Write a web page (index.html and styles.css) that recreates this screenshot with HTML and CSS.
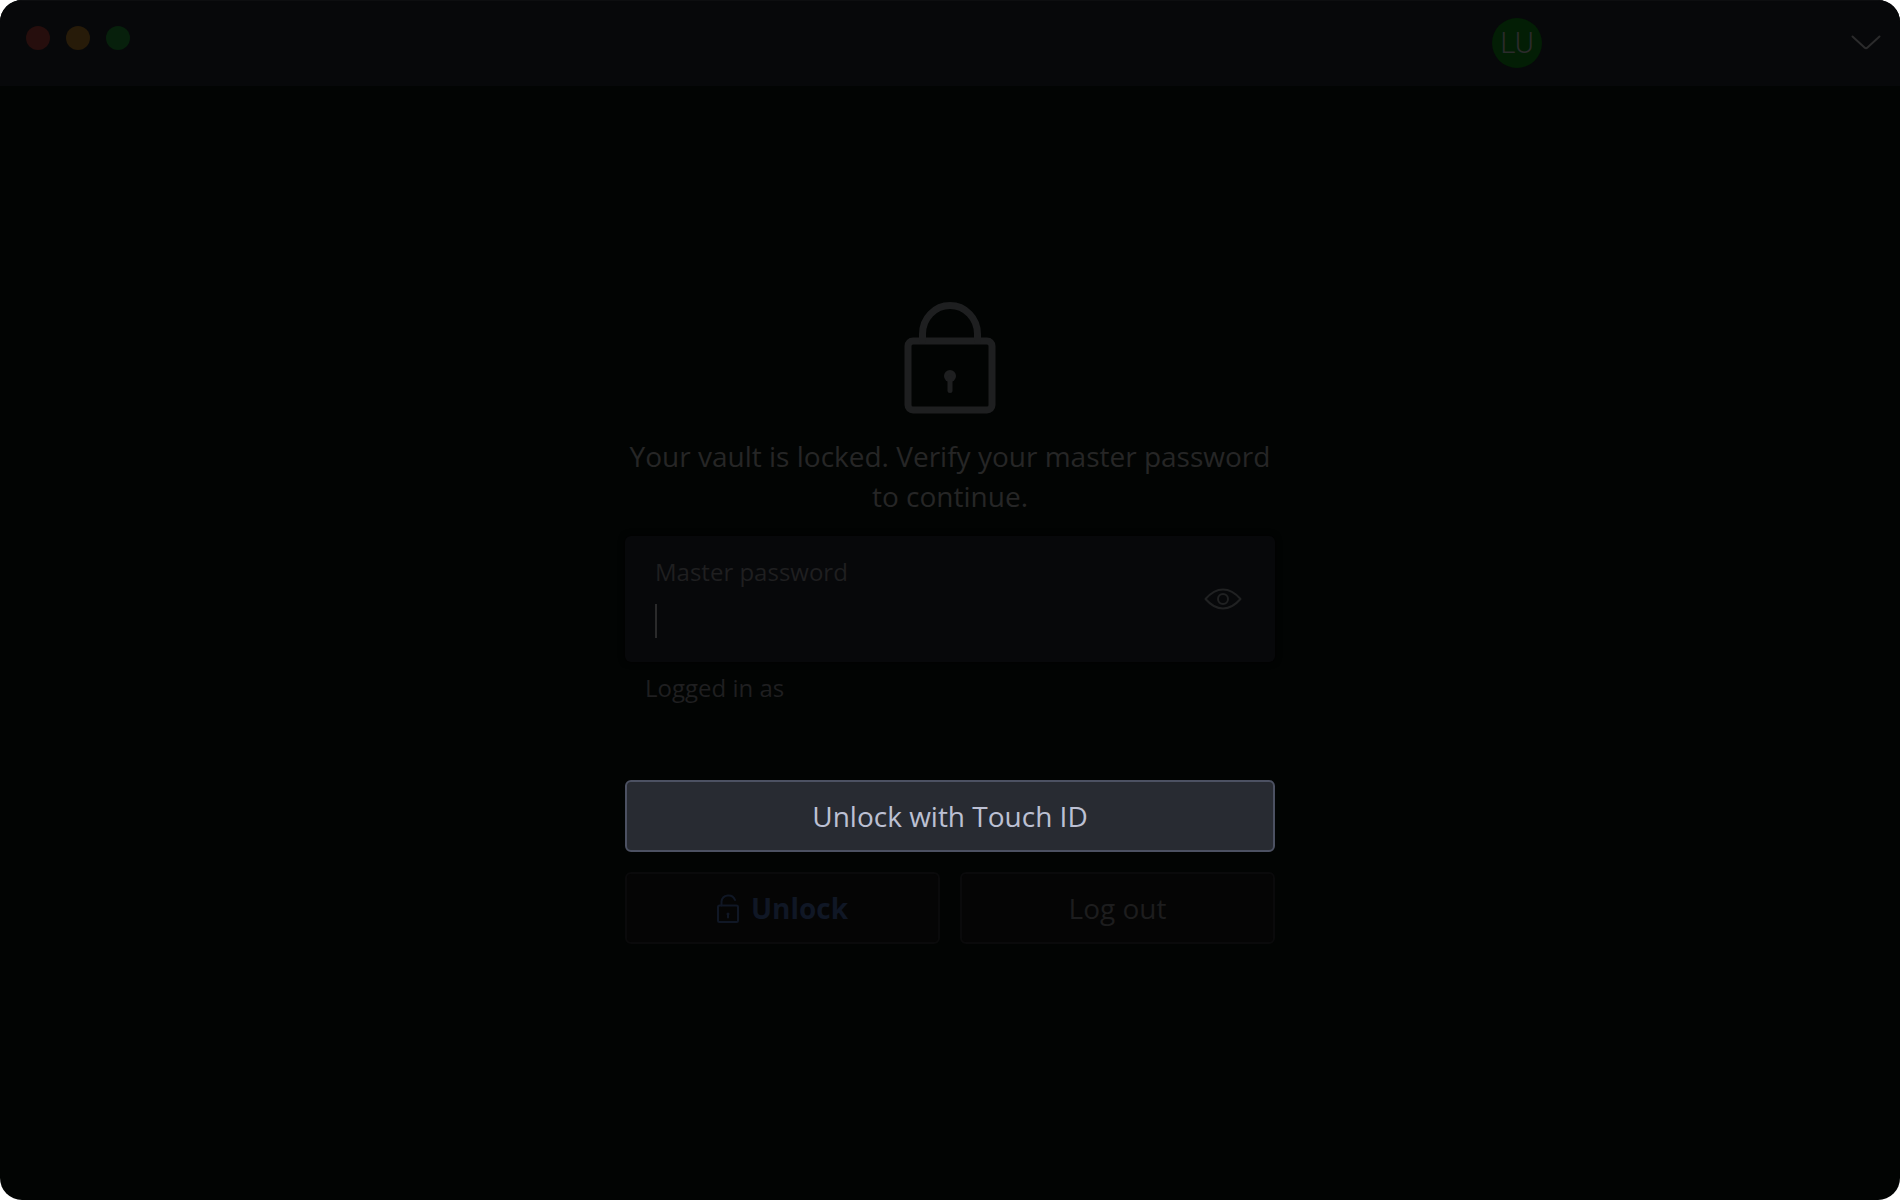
FILE: index.html
```html
<!DOCTYPE html>
<html lang="en">
<head>
    <meta charset="utf-8" />
    <meta name="viewport" content="width=device-width, initial-scale=1" />
    <title>Vault locked</title>
    <link rel="stylesheet" href="styles.css">
</head>
<body>
    <div class="window">
        <header class="titlebar">
            <div class="lights">
                <span class="light red"></span>
                <span class="light yellow"></span>
                <span class="light green"></span>
            </div>
            <button type="button" class="account" aria-label="Account">
                <span class="avatar">LU</span>
                <svg class="chevron" viewBox="0 0 30 16" aria-hidden="true">
                    <path d="M1.500 1.500 L13.500 12.500 Q15 14 16.500 12.500 L28.500 1.500" />
                </svg>
            </button>
        </header>

        <main class="content">
            <form class="lock-form">
                <svg class="lock-icon" viewBox="0 0 92 112" aria-hidden="true">
                    <rect x="4" y="39" width="84" height="69" rx="5" />
                    <path d="M18.500 38 V32 A27.500 28.500 0 0 1 73.500 32 V38" />
                    <circle class="hole" cx="46" cy="74" r="6" />
                    <path class="slot" d="M46 76 V88.500" />
                </svg>
                <p class="message">Your vault is locked. Verify your master password to continue.</p>

                <div class="field">
                    <div class="field-main">
                        <label for="masterPassword">Master password</label>
                        <input id="masterPassword" type="password">
                    </div>
                    <button type="button" class="toggle" aria-label="Toggle visibility">
                        <svg viewBox="0 0 38 22" aria-hidden="true">
                            <path d="M1.500 11 C5 7 11 1.500 19 1.500 S33 7 36.500 11 C33 15 27 20.500 19 20.500 S5 15 1.500 11 Z" />
                            <circle cx="19" cy="11" r="5" />
                        </svg>
                    </button>
                </div>
                <p class="logged-in">Logged in as</p>

                <div class="buttons">
                    <button type="button" class="btn touch-id">Unlock with Touch ID</button>
                    <button type="submit" class="btn primary">
                        <svg class="unlock-icon" viewBox="0 0 22 29" aria-hidden="true">
                            <rect x="1" y="11.500" width="20" height="16.500" rx="1.500" />
                            <path d="M4.500 11.500 V7.500 A7 7 0 0 1 18 6" />
                            <circle class="hole" cx="11" cy="20" r="1.500" />
                            <path class="slot" d="M11 20 V23.500" />
                        </svg>
                        Unlock
                    </button>
                    <button type="button" class="btn">Log out</button>
                </div>
            </form>
        </main>
    </div>
</body>
</html>
```

FILE: styles.css
```css
* {
    box-sizing: border-box;
}

body {
    margin: 0;
    background-color: #fff;
    font-family: "Open Sans", sans-serif;
}

button,
input {
    font-family: inherit;
}

p {
    margin: 0;
}

svg {
    fill: none;
    stroke: currentColor;
    stroke-linecap: round;
    stroke-linejoin: round;
}

.window {
    display: flex;
    flex-direction: column;
    min-height: 100vh;
    border-radius: 22px;
    overflow: hidden;
    background-color: #020403;
}

/* title bar */
.titlebar {
    display: flex;
    justify-content: space-between;
    height: 86px;
    background-color: #07080a;
    border-top: 1px solid #0d0e10;
}

.lights {
    display: flex;
    gap: 16px;
    padding: 25px 26px;
}

.light {
    width: 24px;
    height: 24px;
    border-radius: 50%;
}

.light.red {
    background-color: #260e0d;
}

.light.yellow {
    background-color: #271b09;
}

.light.green {
    background-color: #07200c;
}

.account {
    display: flex;
    align-items: center;
    justify-content: space-between;
    width: 408px;
    height: 84px;
    padding: 0 19px 0 0;
    border: 0;
    background: none;
    color: #2b2b2c;
}

.avatar {
    width: 50px;
    height: 50px;
    border-radius: 50%;
    background-color: #031e05;
    font-family: Roboto, sans-serif;
    font-weight: 300;
    font-size: 29px;
    line-height: 50px;
    text-align: center;
}

.chevron {
    width: 30px;
    height: 16px;
    stroke-width: 2;
}

/* lock screen */
.content {
    flex: 1;
    display: flex;
    align-items: center;
    justify-content: center;
    padding: 20px 20px 60px;
}

.lock-form {
    width: 650px;
    max-width: 100%;
}

.lock-icon {
    display: block;
    width: 92px;
    height: 112px;
    margin: 0 auto 22px;
    color: #1e1f20;
    stroke-width: 7;
}

.hole {
    fill: currentColor;
    stroke: none;
}

.lock-icon .slot {
    stroke-width: 5;
}

.message {
    color: #262626;
    font-size: 28px;
    line-height: 40px;
    text-align: center;
}

.field {
    display: flex;
    align-items: center;
    justify-content: space-between;
    height: 126px;
    margin-top: 20px;
    padding: 0 30px;
    border-radius: 6px;
    background-color: #07080a;
    box-shadow: 0 0 6px #000;
}

.field-main {
    flex: 1;
    padding-bottom: 4px;
}

.field label {
    display: block;
    color: #1f1f20;
    font-size: 24px;
    line-height: 32px;
}

/* the left border is the text cursor */
.field input {
    display: block;
    width: 100%;
    height: 34px;
    margin-top: 16px;
    padding: 0;
    border: 0;
    border-left: 2px solid #2a2a2b;
    outline: none;
    background: none;
    color: #262626;
    font-size: 28px;
}

.toggle {
    padding: 0;
    border: 0;
    background: none;
    color: #202122;
}

.toggle svg {
    display: block;
    width: 44px;
    height: 22px;
    stroke-width: 2;
}

.logged-in {
    padding: 10px 20px 14px;
    color: #1f1f20;
    font-size: 24px;
    line-height: 32px;
}

.buttons {
    display: grid;
    grid-template-columns: 1fr 1fr;
    gap: 20px;
    margin-top: 62px;
}

.btn {
    display: flex;
    align-items: center;
    justify-content: center;
    gap: 12px;
    height: 72px;
    padding: 0;
    border: 2px solid #0a0a0b;
    border-radius: 6px;
    background-color: #050505;
    color: #1d1d1e;
    font-size: 28px;
}

.btn.touch-id {
    grid-column: 1 / -1;
    border-color: #4c5162;
    background-color: #282b32;
    color: #bcc0d3;
}

.btn.primary {
    color: #101725;
    font-weight: 700;
}

.unlock-icon {
    width: 22px;
    height: 29px;
    stroke-width: 2;
}
```
